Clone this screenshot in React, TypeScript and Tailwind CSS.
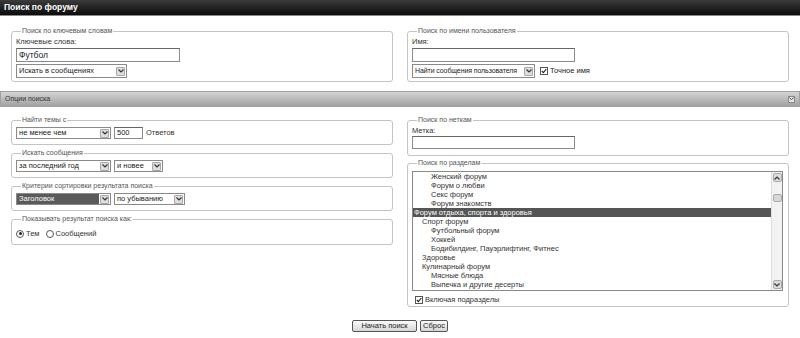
import React from 'react';

const Chevron = ({ up = false }: { up?: boolean }) => (
  <svg width="6" height="4" viewBox="0 0 6 4">
    <path
      d={up ? 'M0.5 3.5 L3 1 L5.5 3.5' : 'M0.5 0.5 L3 3 L5.5 0.5'}
      fill="none"
      stroke="#333"
      strokeWidth="1.2"
    />
  </svg>
);

const Fieldset = ({
  legend,
  className,
  children,
}: {
  legend: string;
  className: string;
  children: React.ReactNode;
}) => (
  <fieldset
    className={`rounded-[3px] border border-[#c4c4c4] px-[4px] ${className}`}
  >
    <legend className="ml-[5px] px-[1px] text-[7px] leading-[8px] text-[#555]">
      {legend}
    </legend>
    {children}
  </fieldset>
);

const Select = ({
  className,
  children,
  dark = false,
  small = false,
}: {
  className: string;
  children: React.ReactNode;
  dark?: boolean;
  small?: boolean;
}) => (
  <div
    className={`flex items-center border border-[#8a8a8a] bg-white ${className}`}
  >
    <span
      className={`flex h-full flex-1 items-center overflow-hidden whitespace-nowrap pl-[2px] ${
        small ? 'text-[7px] tracking-[-0.1px]' : 'text-[7.5px]'
      } ${dark ? 'bg-[#5a5a5a] text-white' : 'text-[#222]'}`}
    >
      {children}
    </span>
    <span className="mx-[1px] flex h-[9px] w-[9px] shrink-0 items-center justify-center rounded-[1px] border border-[#a8a8a8] bg-[#dedede]">
      <Chevron />
    </span>
  </div>
);

const Input = ({
  className,
  children,
}: {
  className: string;
  children?: React.ReactNode;
}) => (
  <div
    className={`flex items-center border border-[#8a8a8a] border-t-[#666] bg-white pl-[2px] ${className}`}
  >
    {children}
  </div>
);

const Check = () => (
  <span className="flex h-[8px] w-[8px] items-center justify-center border border-[#555] bg-white">
    <svg width="6" height="6" viewBox="0 0 6 6">
      <path d="M0.8 3 L2.4 4.6 L5.3 1" fill="none" stroke="#222" strokeWidth="1.1" />
    </svg>
  </span>
);

const Radio = ({ on = false }: { on?: boolean }) => (
  <span className="flex h-[8px] w-[8px] items-center justify-center rounded-full border border-[#555] bg-white">
    {on && <span className="h-[3px] w-[3px] rounded-full bg-[#222]" />}
  </span>
);

const sections = [
  { name: 'Женский форум', level: 2 },
  { name: 'Форум о любви', level: 2 },
  { name: 'Секс форум', level: 2 },
  { name: 'Форум знакомств', level: 2 },
  { name: 'Форум отдыха, спорта и здоровья', level: 0, active: true },
  { name: 'Спорт форум', level: 1 },
  { name: 'Футбольный форум', level: 2 },
  { name: 'Хоккей', level: 2 },
  { name: 'Бодибилдинг, Пауэрлифтинг, Фитнес', level: 2 },
  { name: 'Здоровье', level: 1 },
  { name: 'Кулинарный форум', level: 1 },
  { name: 'Мясные блюда', level: 2 },
  { name: 'Выпечка и другие десерты', level: 2 },
];

const indent = ['pl-[1px]', 'pl-[9px]', 'pl-[18px]'];

const App = () => {
  return (
    <div className="h-[338px] w-[800px] overflow-hidden bg-white font-['Liberation_Sans',Arial,sans-serif] text-[#222]">
      <header className="flex h-[16px] items-center border-b border-[#888] bg-gradient-to-b from-[#3c3c3c] to-[#0c0c0c] pl-[4px]">
        <h1 className="text-[8.5px] font-bold text-white">Поиск по форуму</h1>
      </header>

      <div className="mt-[11px] grid grid-cols-2 gap-[14px] px-[11px]">
        <Fieldset legend="Поиск по ключевым словам" className="h-[55px]">
          <div className="mt-[3px] text-[7.5px] leading-[8px] text-[#333]">
            Ключевые слова:
          </div>
          <Input className="mt-[2px] h-[14px] w-[164px] text-[8.5px]">Футбол</Input>
          <Select className="mt-[2px] h-[14px] w-[111px]">Искать в сообщениях</Select>
        </Fieldset>

        <Fieldset legend="Поиск по имени пользователя" className="h-[55px]">
          <div className="mt-[3px] text-[7.5px] leading-[8px] text-[#333]">Имя:</div>
          <Input className="mt-[2px] h-[14px] w-[163px]" />
          <div className="mt-[2px] flex items-center gap-[5px]">
            <Select className="h-[14px] w-[123px]" small>
              Найти сообщения пользователя
            </Select>
            <div className="flex items-center gap-[2px] text-[7.5px]">
              <Check />
              <span>Точное имя</span>
            </div>
          </div>
        </Fieldset>
      </div>

      <div className="mt-[9px] flex h-[16px] items-center justify-between border border-[#a0a0a0] bg-gradient-to-b from-[#d4d4d4] to-[#a2a2a2] pl-[4px] pr-[4px]">
        <span className="text-[7px] text-[#333]">Опции поиска</span>
        <span className="flex h-[7px] w-[7px] items-center justify-center border border-[#888] bg-[#e4e4e4]">
          <svg width="5" height="4" viewBox="0 0 5 4">
            <path d="M0.5 0.5 L2.5 2.8 L4.5 0.5" fill="none" stroke="#555" strokeWidth="1" />
          </svg>
        </span>
      </div>

      <div className="mt-[9px] grid grid-cols-2 gap-[14px] px-[11px]">
        <div className="flex flex-col gap-[4px]">
          <Fieldset legend="Найти темы с" className="h-[29px]">
            <div className="mt-[3px] flex items-center gap-[3px]">
              <Select className="h-[12px] w-[95px]">не менее чем</Select>
              <Input className="h-[12px] w-[29px] text-[7.5px]">500</Input>
              <span className="text-[7.5px] text-[#333]">Ответов</span>
            </div>
          </Fieldset>
          <Fieldset legend="Искать сообщения" className="h-[29px]">
            <div className="mt-[3px] flex items-center gap-[3px]">
              <Select className="h-[12px] w-[95px]">за последний год</Select>
              <Select className="h-[12px] w-[49px]">и новее</Select>
            </div>
          </Fieldset>
          <Fieldset legend="Критерии сортировки результата поиска" className="h-[29px]">
            <div className="mt-[3px] flex items-center gap-[3px]">
              <Select className="h-[12px] w-[95px]" dark>
                Заголовок
              </Select>
              <Select className="h-[12px] w-[71px]">по убыванию</Select>
            </div>
          </Fieldset>
          <Fieldset legend="Показывать результат поиска как:" className="h-[30px]">
            <div className="mt-[5px] flex items-center text-[7.5px] text-[#333]">
              <Radio on />
              <span className="ml-[2px] mr-[6px]">Тем</span>
              <Radio />
              <span className="ml-[2px]">Сообщений</span>
            </div>
          </Fieldset>
        </div>

        <div className="flex flex-col gap-[3px]">
          <Fieldset legend="Поиск по неткам" className="h-[40px]">
            <div className="mt-[3px] text-[7.5px] leading-[8px] text-[#333]">Метка:</div>
            <Input className="mt-[1px] h-[13px] w-[163px]" />
          </Fieldset>
          <Fieldset legend="Поиск по разделам" className="h-[148px] pr-[5px]">
            <div className="mt-[4px] flex h-[120px] border border-[#8a8a8a] bg-white">
              <ul className="flex-1">
                {sections.map((s) => (
                  <li
                    key={s.name}
                    className={`flex h-[9px] items-center text-[7.5px] ${indent[s.level]} ${
                      s.active ? 'bg-[#555] text-white' : 'text-[#333]'
                    }`}
                  >
                    {s.name}
                  </li>
                ))}
              </ul>
              <div className="flex w-[11px] flex-col items-center border-l border-[#ddd] bg-[#f2f2f2] py-[1px]">
                <span className="flex h-[9px] w-[9px] items-center justify-center rounded-[2px] border border-[#aaa] bg-[#dcdcdc]">
                  <Chevron up />
                </span>
                <span className="mt-[12px] h-[8px] w-[9px] rounded-[2px] border border-[#aaa] bg-[#d8d8d8]" />
                <span className="flex-1" />
                <span className="flex h-[9px] w-[9px] items-center justify-center rounded-[2px] border border-[#aaa] bg-[#dcdcdc]">
                  <Chevron />
                </span>
              </div>
            </div>
            <div className="mt-[3px] flex items-center gap-[2px] pl-[3px] text-[7.5px] text-[#333]">
              <Check />
              <span>Включая подразделы</span>
            </div>
          </Fieldset>
        </div>
      </div>

      <div className="mt-[13px] flex justify-center gap-[3px]">
        <button className="h-[12px] w-[65px] rounded-[2px] border border-[#555] bg-gradient-to-b from-[#fafafa] to-[#d6d6d6] text-[7.5px] leading-[10px] text-[#222]">
          Начать поиск
        </button>
        <button className="h-[12px] w-[28px] rounded-[2px] border border-[#555] bg-gradient-to-b from-[#fafafa] to-[#d6d6d6] text-[7.5px] leading-[10px] text-[#222]">
          Сброс
        </button>
      </div>
    </div>
  );
};

export default App;
